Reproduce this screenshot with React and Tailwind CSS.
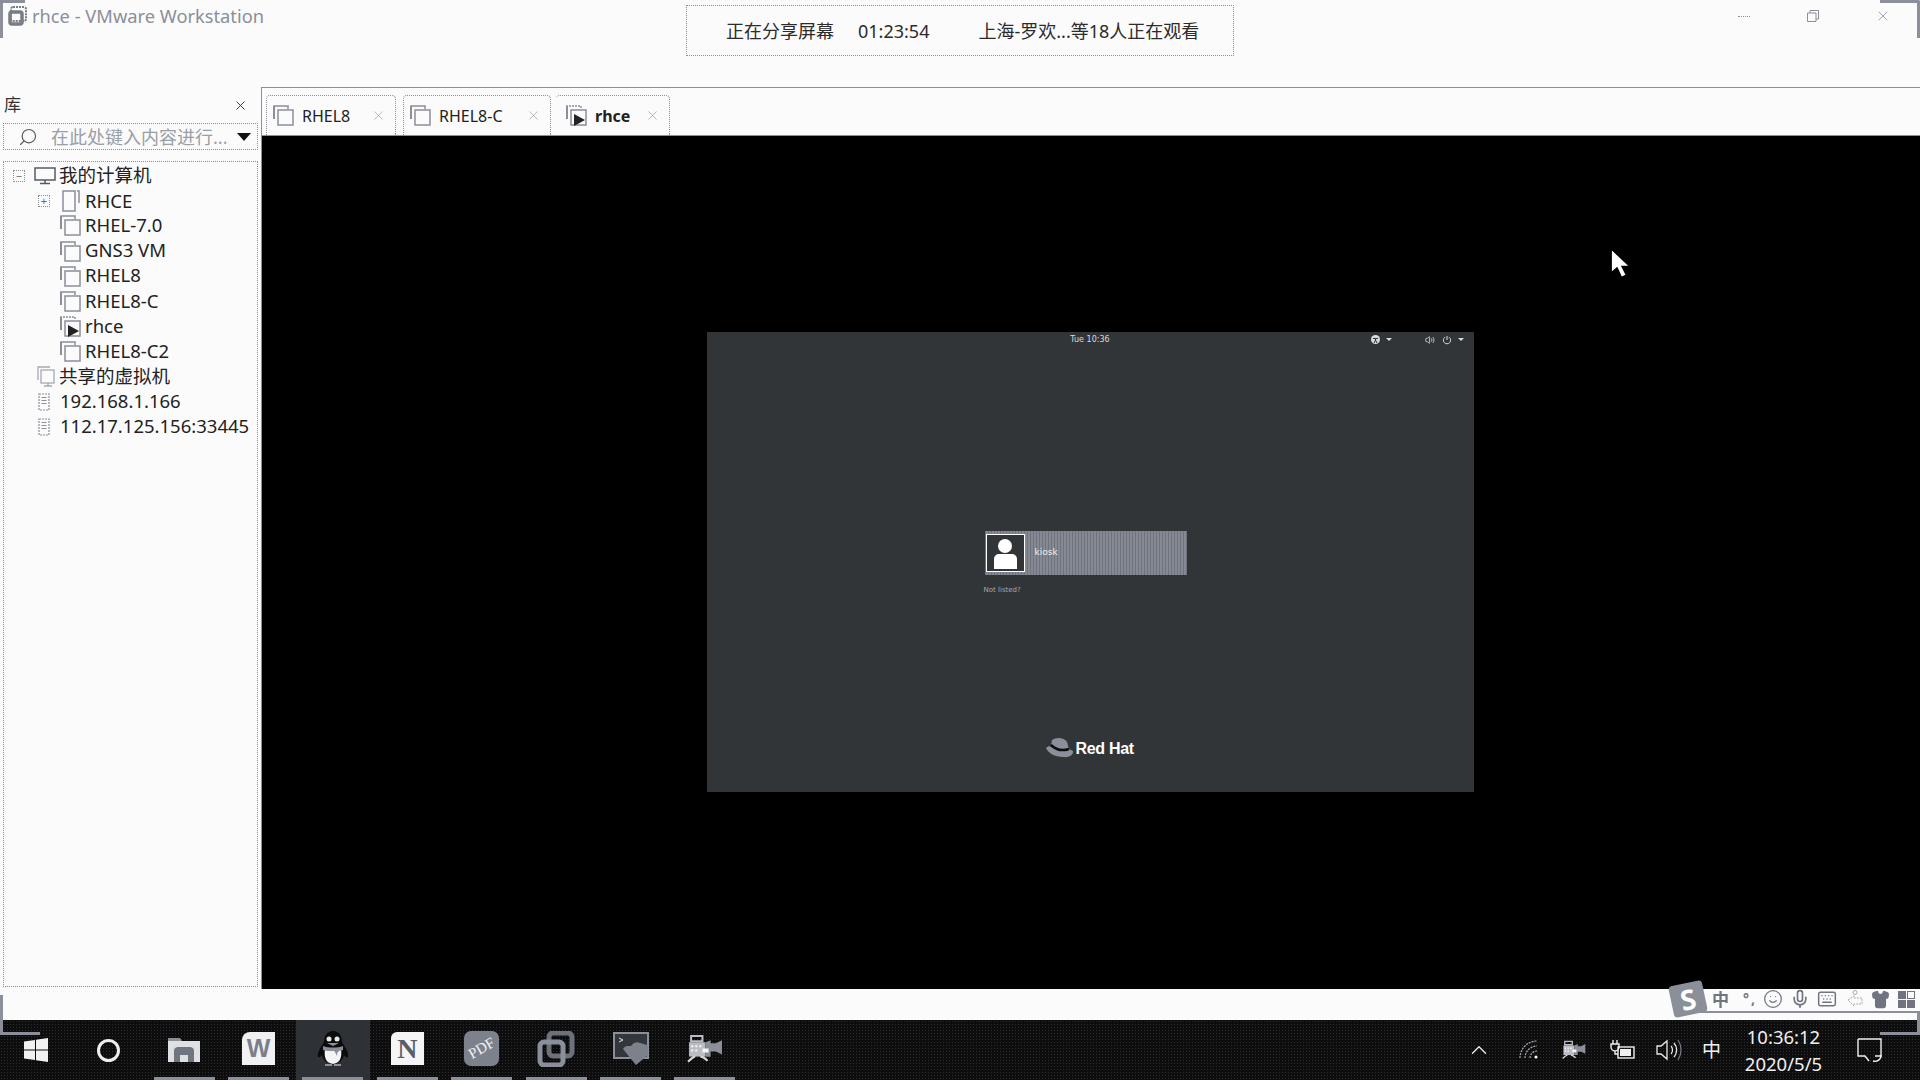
import { ChevronUp, Keyboard, Mic, Search, Shirt, Smile, Volume2, X } from 'lucide-react'

const GREY = '#8a8f9a'

function VmIcon({ play }) {
  return (
    <svg width="23" height="23" viewBox="0 0 23 23" fill="none" stroke={GREY} strokeWidth="1.5" className="shrink-0">
      <path d="M2 15V2h14v3" strokeDasharray={play ? '2 1' : undefined} />
      <path d="M2 2v13" strokeWidth="2" />
      <rect x="6" y="6" width="15" height="15" />
      {play && <path d="M9 10l11 6-11 6z" fill="#222" stroke="none" />}
    </svg>
  )
}

function Monitor() {
  return (
    <svg width="22" height="18" viewBox="0 0 22 18" fill="none" stroke="#555b66" strokeWidth="1.5" className="shrink-0">
      <rect x="1" y="1" width="20" height="12" />
      <path d="M11 13v3M6 16.5h10" />
    </svg>
  )
}

function Doc() {
  return (
    <svg width="18" height="22" viewBox="0 0 18 22" fill="none" stroke={GREY} strokeWidth="1.5" className="shrink-0">
      <path d="M1 1h12v20H1zM15 1h2v12" />
    </svg>
  )
}

function Shared() {
  return (
    <svg width="18" height="22" viewBox="0 0 18 22" fill="none" stroke="#a5a9b2" strokeWidth="1.3" className="shrink-0">
      <path d="M1 14V1h12" />
      <rect x="4" y="4" width="13" height="13" />
      <path d="M7 20h8M11 17v3" />
    </svg>
  )
}

function Server() {
  return (
    <svg width="12" height="18" viewBox="0 0 12 18" fill="none" stroke={GREY} strokeWidth="1.2" className="shrink-0">
      <rect x="1" y="1" width="10" height="16" strokeDasharray="2 1" />
      <path d="M3.5 4.5h5M3.5 7.5h5M3.5 10.5h5" />
    </svg>
  )
}

function ExpandBox({ open }) {
  return (
    <span className="flex h-[12px] w-[12px] shrink-0 items-center justify-center border border-dotted border-[#8a8f9a] text-[11px] leading-none text-[#666]">
      {open ? '−' : '+'}
    </span>
  )
}

const vmNames = [
  { name: 'RHEL-7.0' },
  { name: 'GNS3 VM' },
  { name: 'RHEL8' },
  { name: 'RHEL8-C' },
  { name: 'rhce', play: true },
  { name: 'RHEL8-C2' },
]

function TreeText({ children }) {
  return <span className="whitespace-nowrap text-[18.5px] leading-none text-[#222]">{children}</span>
}

function LibraryTree() {
  return (
    <div className="mt-[11px] ml-[3px] flex-1 w-[255px] border border-dotted border-[#8a8f9a] pt-[1px] [&>div]:flex [&>div]:h-[25.2px] [&>div]:items-center">
      <div className="pl-[9px]">
        <ExpandBox open />
        <span className="ml-[9px] mr-[3px]"><Monitor /></span>
        <TreeText>我的计算机</TreeText>
      </div>
      <div className="pl-[34px]">
        <ExpandBox />
        <span className="ml-[12px] mr-[5px]"><Doc /></span>
        <TreeText>RHCE</TreeText>
      </div>
      {vmNames.map(vm => (
        <div key={vm.name} className="pl-[55px]">
          <VmIcon play={vm.play} />
          <span className="ml-[3px]"><TreeText>{vm.name}</TreeText></span>
        </div>
      ))}
      <div className="pl-[33px]">
        <Shared />
        <span className="ml-[4px]"><TreeText>共享的虚拟机</TreeText></span>
      </div>
      <div className="pl-[34px]">
        <Server />
        <span className="ml-[10px]"><TreeText>192.168.1.166</TreeText></span>
      </div>
      <div className="pl-[34px]">
        <Server />
        <span className="ml-[10px]"><TreeText>112.17.125.156:33445</TreeText></span>
      </div>
    </div>
  )
}

function Sidebar() {
  return (
    <aside className="flex w-[261px] shrink-0 flex-col pb-[2px]">
      <div className="flex h-[36px] items-center justify-between pl-[4px] pr-[13px]">
        <span className="text-[17px] text-[#333]">库</span>
        <X size={15} strokeWidth={1.5} color="#333" />
      </div>
      <div className="ml-[3px] flex h-[27px] w-[255px] items-center border border-dotted border-[#8a8f9a] pl-[14px] pr-[6px]">
        <Search size={20} strokeWidth={1.4} color="#555" className="-scale-x-100" />
        <span className="ml-[13px] flex-1 whitespace-nowrap text-[18px] leading-none text-[#9a9ea7]">在此处键入内容进行...</span>
        <span className="h-0 w-0 border-x-[7px] border-t-[8px] border-x-transparent border-t-[#111]" />
      </div>
      <LibraryTree />
    </aside>
  )
}

function Tab({ name, active, className, closeClass }) {
  return (
    <div className={`flex h-[40px] items-center border-r border-t border-dotted border-[#8a8f9a] rounded-t-[4px] ${className}`}>
      <VmIcon play={active} />
      <span className={`ml-[7px] whitespace-nowrap text-[16px] leading-none text-[#222] ${active ? 'font-bold' : ''}`}>{name}</span>
      <X size={15} strokeWidth={1} color="#8a8f9a" className={closeClass} />
    </div>
  )
}

function TabStrip() {
  return (
    <div className="flex h-[48px] items-end border-b border-[#8a8f9a] pl-[4px]">
      <Tab name="RHEL8" className="w-[130px] border-l pl-[5px]" closeClass="ml-[21px]" />
      <Tab name="RHEL8-C" className="ml-[7px] w-[148px] border-l pl-[5px]" closeClass="ml-[23px]" />
      <Tab name="rhce" active className="ml-[5px] w-[114px] pl-[9px]" closeClass="ml-[15px]" />
    </div>
  )
}

function RedHatHat() {
  return (
    <svg width="30" height="24" viewBox="0 0 30 24">
      <path d="M7 3c4-3 12-3 15 2l2 7-10 1-8-4z" fill="#8a8f9a" />
      <path d="M1 11c2-2 4-2 6-1 5 3 12 4 17 2l4 2c1 3-3 7-10 6C10 20 3 16 1 11z" fill="#8a8f9a" />
      <path d="M6 8c5 5 12 6 18 4" fill="none" stroke="#0c0d0e" strokeWidth="2.5" />
    </svg>
  )
}

function GuestScreen() {
  return (
    <div className="flex h-[460px] w-[767px] flex-col bg-[#323538] font-['DejaVu_Sans',sans-serif]">
      <div className="relative flex h-[16px] items-center justify-center text-[8px] text-[#d9dadc]">
        <span className="mt-[1px]">Tue 10:36</span>
        <div className="absolute right-[10px] flex items-center text-[#d9dadc]">
          <svg width="9" height="9" viewBox="0 0 9 9">
            <circle cx="4.500" cy="4.500" r="4.500" fill="#d9dadc" />
            <path d="M2 3.500h5M4.500 3.500v2M3 8l1.500-3L6 8" fill="none" stroke="#323538" />
          </svg>
          <span className="ml-[6px] h-0 w-0 border-x-[3px] border-t-[3px] border-x-transparent border-t-[#d9dadc]" />
          <Volume2 size={10} className="ml-[33px]" />
          <svg width="10" height="10" viewBox="0 0 10 10" fill="none" stroke="#d9dadc" className="ml-[7px]">
            <path d="M3 2.2a3.6 3.6 0 1 0 4 0M5 1v4" />
          </svg>
          <span className="ml-[6px] h-0 w-0 border-x-[3px] border-t-[3px] border-x-transparent border-t-[#d9dadc]" />
        </div>
      </div>
      <div className="ml-[278px] mt-[183px] flex h-[44px] w-[202px] items-center bg-[#7b7f89] bg-[repeating-linear-gradient(90deg,#6f737d_0,#6f737d_1px,#858994_1px,#858994_3px)] pl-[1px]">
        <div className="flex h-[38px] w-[39px] flex-col items-center justify-end overflow-hidden border border-white bg-[#323538] pb-[2px]">
          <span className="h-[14px] w-[14px] rounded-full bg-white" />
          <span className="mt-[1px] h-[15px] w-[23px] rounded-t-[5px] bg-white" />
        </div>
        <span className="ml-[10px] text-[9px] leading-none text-[#f0f0f0]">kiosk</span>
      </div>
      <div className="ml-[277px] mt-[10px] h-[10px] text-[7px] leading-[10px] text-[#a5a8af]">Not listed?</div>
      <div className="ml-[338px] mt-[142px] flex items-center">
        <RedHatHat />
        <span className="ml-[1px] font-['Liberation_Sans',sans-serif] text-[16px] font-bold leading-none tracking-[-0.3px] text-white">Red Hat</span>
      </div>
    </div>
  )
}

function TitleBar() {
  return (
    <div className="relative flex h-[87px] shrink-0 items-start">
      <svg width="26" height="24" viewBox="0 0 26 24" fill="none" stroke="#777c87" className="ml-[3px] mt-[4px]">
        <rect x="8" y="3" width="15" height="14" rx="2" strokeWidth="2" strokeDasharray="2 1" />
        <rect x="7" y="8" width="12" height="12" rx="2" strokeWidth="3.500" />
      </svg>
      <span className="ml-[0px] mt-[5px] pl-[3px] text-[18.3px] leading-[22px] text-[#8a8f9a]">rhce - VMware Workstation</span>
      <div className="absolute left-[686px] top-[5px] flex h-[51px] w-[548px] items-center border border-dotted border-[#8a8f9a] pl-[39px] pt-[2px] text-[18px] text-[#2b2b2b]">
        <span>正在分享屏幕</span>
        <span className="ml-[24px]">01:23:54</span>
        <span className="ml-[49px] whitespace-nowrap">上海-罗欢...等18人正在观看</span>
      </div>
      <div className="absolute right-[29px] top-[8px] flex items-center">
        <span className="h-px w-[12px] border-b border-dotted border-[#8a8f9a]" />
        <svg width="12" height="12" viewBox="0 0 12 12" fill="none" stroke={GREY} className="ml-[57px]">
          <path d="M3 3V.5h8.5V9H9M.5 3h8.5v8.5H.5z" />
        </svg>
        <X size={16} strokeWidth={1.2} color="#8a8f9a" className="ml-[56px]" />
      </div>
    </div>
  )
}

function ImeBar() {
  return (
    <div className="absolute bottom-[68px] right-[5px] flex h-[26px] items-center text-[#6f7480]">
      <div className="mr-[7px] flex h-[32px] w-[34px] -rotate-12 items-center justify-center rounded-[4px] bg-[#8a8f9a] text-[28px] font-bold leading-none text-white">S</div>
      <span className="mr-[14px] text-[17px] font-bold leading-none">中</span>
      <span className="mr-[4px] w-[16px] whitespace-nowrap text-[14px] font-bold leading-none tracking-[2px]">°,</span>
      <Smile size={20} strokeWidth={1.5} />
      <Mic size={20} strokeWidth={2} className="ml-[7px]" />
      <Keyboard size={20} strokeWidth={1.8} className="ml-[7px]" />
      <svg width="20" height="20" viewBox="0 0 20 20" fill="none" stroke="#a5a9b2" className="ml-[9px]">
        <path d="M2 11l6-4v2h8v6H8v2z" strokeDasharray="2 1" />
        <circle cx="9" cy="3.5" r="2" />
      </svg>
      <Shirt size={19} fill="#6f7480" className="ml-[5px]" />
      <div className="ml-[8px] grid grid-cols-2 gap-[1px]">
        <span className="h-[8px] w-[8px] bg-[#6f7480]" />
        <span className="h-[8px] w-[8px] border border-[#6f7480]" />
        <span className="h-[8px] w-[8px] bg-[#6f7480]" />
        <span className="h-[8px] w-[8px] bg-[#6f7480]" />
      </div>
    </div>
  )
}

function Win() {
  return (
    <svg width="24" height="24" viewBox="0 0 24 24" fill="#f1f1f1">
      <path d="M0 3.5l11-1.5v9.5H0zM12 1.8L24 0v11.5H12zM0 12.5h11V22L0 20.5zM12 12.5h12V24l-12-1.8z" />
    </svg>
  )
}

function Explorer() {
  return (
    <svg width="32" height="26" viewBox="0 0 32 26">
      <path d="M0 2h10l3 3h19v21H0z" fill="#dfe0e3" />
      <path d="M0 2h12l2 3H0z" fill="#8a8f9a" />
      <path d="M6 26V15c0-3 2-4 4-4h12c2 0 4 1 4 4v11h-6v-7h-8v7z" fill="#70757f" />
    </svg>
  )
}

function Penguin() {
  return (
    <svg width="32" height="36" viewBox="0 0 32 36">
      <path d="M16 0c6 0 9 5 9 11 3 5 7 10 6 15-2 1-3-1-4-2-1 5-5 9-11 9s-10-4-11-9c-1 1-2 3-4 2-1-5 3-10 6-15C7 5 10 0 16 0z" fill="#0b0b0c" />
      <path d="M8 18c3 2 13 2 16 0 1 7 0 14-8 15-8-1-9-8-8-15z" fill="#f4f4f5" />
      <path d="M6 15c5 2 15 2 20 0v4c-3 1-6 0-6 6-2-4-2-5-4-5-5 0-7 0-10-1z" fill="#8a8f9a" />
      <circle cx="12" cy="8" r="2.5" fill="#e8e8e8" />
      <circle cx="20" cy="8" r="2.5" fill="#e8e8e8" />
      <path d="M10 12h12l-6 3z" fill="#8a8f9a" />
      <path d="M8 33h7v2H8zM17 33h7v2h-7z" fill="#8a8f9a" />
    </svg>
  )
}

function WordIcon() {
  return (
    <div className="flex h-[33px] w-[33px] items-center justify-center rounded-tl-[8px] bg-[#f1f1f3] font-['Liberation_Sans',sans-serif] text-[25px] font-bold leading-none text-[#7a7f89]">W</div>
  )
}

function OneNote() {
  return (
    <div className="flex h-[33px] w-[33px] items-center justify-center rounded-tl-[6px] bg-[#f5f5f6] font-['Liberation_Serif',serif] text-[28px] font-bold leading-none text-[#5a5e66]">N</div>
  )
}

function PdfIcon() {
  return (
    <div className="flex h-[35px] w-[35px] items-center justify-center rounded-[7px] bg-[#7c818c] font-['Liberation_Serif',serif] text-[15px] leading-none text-[#f0f0f0]">
      <span className="-rotate-[30deg]">PDF</span>
    </div>
  )
}

function VmwareIcon() {
  return (
    <svg width="38" height="36" viewBox="0 0 38 36" fill="none">
      <rect x="12" y="2" width="23" height="23" rx="4" stroke="#6d717b" strokeWidth="5" />
      <rect x="3" y="11" width="23" height="23" rx="4" stroke="#8a8f9a" strokeWidth="5" />
    </svg>
  )
}

function TerminalIcon() {
  return (
    <svg width="36" height="34" viewBox="0 0 36 34">
      <rect x="1" y="1" width="34" height="25" fill="#33363a" stroke="#8a8f9a" strokeWidth="2" />
      <path d="M6 6l4 2-4 2" fill="none" stroke="#e6e6e6" />
      <path d="M10 17c2-4 6-3 8-3 2-3 6-5 9-3 3 1 6 1 8 3v9l-12 10z" fill="#7c818c" />
    </svg>
  )
}

function Camera({ scale }) {
  return (
    <svg width={scale} height={scale * 0.8} viewBox="0 0 35 28" fill="#b9bcc3">
      <path d="M2 8h16v14H2z" />
      <path d="M4 2h11v5H4z" fill="none" stroke="#b9bcc3" strokeWidth="2" />
      <path d="M18 8l5-2v3h5l6-3v14l-6-3h-5v5H18z" fill="#8a8f9a" />
      <path d="M4 11h2v2H4zM8 11h2v2H8zM12 11h2v2h-2zM4 15h2v2H4zM8 15h2v2H8zM15 14h6v4h-6z" fill="#f5f5f5" />
      <path d="M1 27c3-3 5-5 7-5M20 26c-3-3-5-4-7-4" fill="none" stroke="#d6d7da" strokeWidth="2" />
    </svg>
  )
}

function AppButton({ children, active }) {
  return (
    <div className={`flex w-[74.4px] shrink-0 flex-col items-center ${active ? 'bg-[#2e3135]' : ''}`}>
      <div className="flex flex-1 items-center justify-center">{children}</div>
      <span className="h-[3px] w-[61px] bg-[#8a8f9a]" />
    </div>
  )
}

function Taskbar() {
  return (
    <footer className="flex h-[60px] shrink-0 bg-[#0d0d0e] bg-[radial-gradient(#2c2e32_0.6px,transparent_0.7px)] bg-[length:3px_3px] text-[#f0f0f0]">
      <div className="flex w-[72px] shrink-0 items-center justify-center"><Win /></div>
      <div className="mr-[2px] flex w-[73px] shrink-0 items-center justify-center">
        <span className="h-[23px] w-[23px] rounded-full border-[3px] border-[#eeeeee]" />
      </div>
      <AppButton><Explorer /></AppButton>
      <AppButton><WordIcon /></AppButton>
      <AppButton active><Penguin /></AppButton>
      <AppButton><OneNote /></AppButton>
      <AppButton><PdfIcon /></AppButton>
      <AppButton><VmwareIcon /></AppButton>
      <AppButton><TerminalIcon /></AppButton>
      <AppButton><Camera scale={36} /></AppButton>

      <div className="ml-auto flex items-center pr-[37px]">
        <ChevronUp size={26} strokeWidth={1.2} />
        <svg width="24" height="24" viewBox="0 0 24 24" fill="none" stroke="#a8abb2" strokeWidth="1.2" className="ml-[26px]">
          <path d="M2 20A17 17 0 0 1 19 3M7 20A12 12 0 0 1 19 8M12 20a7 7 0 0 1 7-7" strokeDasharray="2 1" />
          <circle cx="18" cy="19" r="1.5" fill="#fff" stroke="none" />
        </svg>
        <span className="ml-[20px]"><Camera scale={24} /></span>
        <svg width="26" height="22" viewBox="0 0 26 22" fill="none" stroke="#f0f0f0" strokeWidth="1.4" className="ml-[24px]">
          <path d="M3 1v4M7 1v4M1 5h8v3a4 4 0 0 1-8 0zM5 12v3h3" />
          <rect x="8" y="8" width="16" height="11" />
          <rect x="10" y="10" width="11" height="7" fill="#f0f0f0" stroke="none" />
        </svg>
        <svg width="26" height="24" viewBox="0 0 26 24" fill="none" stroke="#e8e8e8" strokeWidth="1.3" className="ml-[20.5px]">
          <path d="M1 8h4l6-5v18l-6-5H1zM15 8c2 2 2 6 0 8M18 5c3.500 4 3.500 10 0 14" />
          <path d="M22 2c4 6 4 14 0 20" stroke="#70757f" />
        </svg>
        <span className="ml-[19.5px] text-[19px] leading-none">中</span>
        <div className="ml-[22.5px] mb-[1px] flex w-[80px] flex-col items-center text-[18.5px] leading-[27px]">
          <span>10:36:12</span>
          <span>2020/5/5</span>
        </div>
        <svg width="26" height="26" viewBox="0 0 26 26" fill="none" stroke="#f0f0f0" strokeWidth="1.4" className="ml-[33.5px]">
          <path d="M1 2h23v17h-6M12 24l-4-5H1V2" />
          <path d="M16 24a6 6 0 0 0 8-6" />
        </svg>
      </div>
    </footer>
  )
}

export default function App() {
  return (
    <div className="relative flex h-[1080px] w-[1920px] flex-col overflow-hidden bg-[#fbfbfb] font-['Noto_Sans','Noto_Sans_CJK_SC',sans-serif]">
      <TitleBar />

      <div className="flex h-[902px] shrink-0">
        <Sidebar />
        <main className="flex flex-1 flex-col border-l border-t border-[#8a8f9a]">
          <TabStrip />
          <div className="flex flex-1 items-center justify-center bg-black pb-[2px] pr-[2px]">
            <GuestScreen />
          </div>
        </main>
      </div>

      <div className="h-[31px] shrink-0" />
      <Taskbar />

      {/* pointer caught by the recording */}
      <svg width="18" height="32" viewBox="0 0 20 32" className="absolute left-[1611px] top-[248px]">
        <path d="M1 1v23l6-5 5 11 4-2-5-10h8z" fill="#fff" />
      </svg>

      <ImeBar />

      {/* corner marks of the recorded area */}
      <span className="absolute right-0 top-0 h-[38px] w-[40px] rounded-tr-[2px] border-r-[3px] border-t-[3px] border-[#8a8f9a]" />
      <span className="absolute left-0 top-0 h-[38px] w-[25px] border-l-[3px] border-t-[3px] border-[#8a8f9a]" />
      <span className="absolute bottom-[45px] left-0 h-[40px] w-[40px] border-b-[3px] border-l-[3px] border-[#8a8f9a]" />
      <span className="absolute bottom-[45px] right-0 h-[24px] w-[40px] border-b-[3px] border-r-[3px] border-[#8a8f9a]" />
      <span className="absolute bottom-[67px] right-[3px] h-[2px] w-[222px] bg-[#8a8f9a]" />
    </div>
  )
}
